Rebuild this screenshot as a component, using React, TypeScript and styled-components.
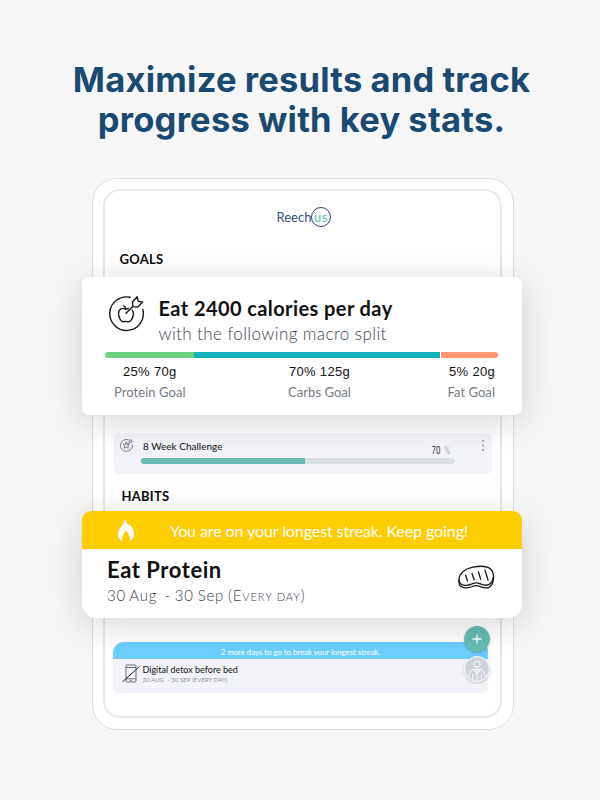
import React from 'react';
import styled, { createGlobalStyle } from 'styled-components';

const GlobalStyle = createGlobalStyle`
  *, *::before, *::after { box-sizing: border-box; }
  body { margin: 0; background: #f7f7f7; font-family: Lato, "Open Sans", sans-serif; color: #111; }
  svg { display: block; flex: none; }
`;

const Page = styled.main`
  width: 600px;
  height: 800px;
  padding: 60px 0 0 3px;
  overflow: hidden;
  background: #f7f7f7;
  display: flex;
  flex-direction: column;
  align-items: center;
`;

const Headline = styled.h1`
  margin: 0 0 38px;
  font: 700 34.5px/40px Inter, sans-serif;
  letter-spacing: 0.25px;
  word-spacing: -0.5px;
  text-align: center;
  color: #1a4971;
  white-space: nowrap;
`;

const Tablet = styled.div`
  width: 422px;
  height: 552px;
  margin-left: 3px;
  padding: 10px 11px 11px 10px;
  border: 1px solid #dcdcdc;
  border-radius: 25px;
  background: #fff;
`;

const Screen = styled.div`
  height: 529px;
  border: 2px solid #e9e9e9;
  border-radius: 17px;
  display: flex;
  flex-direction: column;
`;

const Logo = styled.div`
  height: 52px;
  padding-left: 171.5px;
  display: flex;
  align-items: center;
  font-size: 13px;
  color: #34507e;
`;

const LogoRing = styled.span`
  width: 20px;
  height: 20px;
  margin-left: -0.5px;
  border: 1px solid #24406f;
  border-radius: 50%;
  display: flex;
  align-items: center;
  justify-content: center;
  padding-bottom: 1px;
  color: #5bbfb4;
  letter-spacing: 0.6px;
`;

const SectionTitle = styled.h2<{ $indent: number; $top: number }>`
  margin: ${(p) => p.$top}px 0 0 ${(p) => p.$indent}px;
  font-size: 13px;
  font-weight: 700;
  line-height: 20px;
  letter-spacing: 0.25px;
  color: #0b0b0b;
`;

const FloatingCard = styled.section<{ $height: number; $top: number; $radius: string }>`
  position: relative;
  z-index: 1;
  flex: none;
  height: ${(p) => p.$height}px;
  margin: ${(p) => p.$top}px -22px 0 -23px;
  border-radius: ${(p) => p.$radius};
  background: #fff;
  box-shadow: 0 7px 34px rgba(0, 0, 0, 0.17);
  white-space: nowrap;
`;

const GoalHeader = styled.div`
  display: flex;
  padding: 18px 0 0 26px;
  gap: 12.5px;
`;

const GoalTitle = styled.div`
  margin-top: 1px;
  font-size: 20px;
  font-weight: 700;
  line-height: 25px;
  letter-spacing: 0.41px;
`;

const GoalSubtitle = styled.div`
  font-size: 17px;
  font-weight: 300;
  line-height: 25px;
  letter-spacing: 0.41px;
  color: #3c434f;
`;

const MacroBar = styled.div`
  height: 6px;
  margin: 6px 24px 0 23px;
  border-radius: 3px;
  overflow: hidden;
  display: grid;
  grid-template-columns: 88.5px 246px 1fr;
  column-gap: 0.5px;
`;

const MacroSegment = styled.span<{ $color: string }>`
  background: ${(p) => p.$color};
`;

const MacroStats = styled.div`
  display: flex;
  justify-content: space-between;
  padding: 4px 27px 0 32px;
`;

const Stat = styled.div<{ $align?: string; $shift?: number }>`
  margin-left: ${(p) => p.$shift ?? 0}px;
  text-align: ${(p) => p.$align ?? 'center'};
`;

const StatValue = styled.div`
  font: 400 13px/20px "Liberation Sans", Arial, sans-serif;
  letter-spacing: 0.3px;
`;

const StatLabel = styled.div`
  font-size: 13px;
  line-height: 20px;
  letter-spacing: 0.05px;
  color: #757b85;
`;

const ChallengeRow = styled.div`
  flex: none;
  display: flex;
  height: 41px;
  margin: 18px 8px 0 9px;
  padding: 6px 6px 0 6px;
  border-radius: 5px;
  background: #f3f4f9;
`;

const ChallengeBody = styled.div`
  width: 314px;
  margin: 0 26px 0 8px;
`;

const ChallengeLine = styled.div`
  display: flex;
  justify-content: space-between;
  height: 19px;
  padding: 0 5px 0 2px;
  font-size: 10px;
  line-height: 15px;
`;

const Percent = styled.span`
  font: 400 10px/23px Roboto, sans-serif;
  transform: scaleX(0.8);
  transform-origin: right;
  word-spacing: 2px;
  color: #333;
`;

const PercentSign = styled.span`
  color: #aaafb4;
`;

const Track = styled.div`
  height: 5.5px;
  border-radius: 3px;
  background: #d9dee3;
  overflow: hidden;
`;

const Fill = styled.div`
  width: 164px;
  height: 100%;
  background: #68bcb3;
`;

const StreakBanner = styled.div`
  height: 38px;
  display: flex;
  align-items: center;
  padding-left: 35px;
  gap: 35px;
  border-radius: 9px 9px 0 0;
  background: #ffcd00;
  color: #fff;
  font-size: 16px;
  letter-spacing: -0.09px;
`;

const HabitBody = styled.div`
  display: flex;
  justify-content: space-between;
  padding: 8px 27px 0 25px;
`;

const HabitTitle = styled.div`
  font-size: 22px;
  font-weight: 700;
  line-height: 26px;
  letter-spacing: 0.55px;
`;

const HabitDates = styled.div`
  font-size: 15px;
  font-weight: 300;
  line-height: 25px;
  letter-spacing: 0.8px;
  word-spacing: -1.1px;
  white-space: pre;
  color: #3c434f;
`;

const SmallCaps = styled.span`
  font-variant-caps: small-caps;
  letter-spacing: 0.95px;
`;

const SteakSlot = styled.div`
  padding-top: 8px;
`;

const DetoxCard = styled.section`
  position: relative;
  flex: none;
  height: 51px;
  margin: 24px 12px 0 8px;
  border-radius: 11px 11px 5px 5px;
  background: #f3f4f9;
`;

const DetoxBanner = styled.div`
  height: 17px;
  border-radius: 11px 9px 0 0;
  background: #6ccfff;
  color: #fff;
  font-size: 8px;
  line-height: 20px;
  letter-spacing: -0.1px;
  text-align: center;
`;

const DetoxBody = styled.div`
  display: flex;
  gap: 3px;
  padding: 5px 0 0 8.5px;
`;

const DetoxTitle = styled.div`
  font-size: 9px;
  line-height: 11px;
`;

const DetoxDates = styled.div`
  font-size: 6px;
  line-height: 10px;
  letter-spacing: 0.08px;
  white-space: pre;
  color: #8b9098;
`;

const RoundActions = styled.div`
  position: absolute;
  top: -16px;
  right: -2px;
  display: flex;
  flex-direction: column;
  gap: 4px;
`;

const RoundButton = styled.button<{ $color: string; $ring: string }>`
  width: 26px;
  height: 26px;
  padding: 0;
  border: 1px solid ${(p) => p.$ring};
  border-radius: 50%;
  background: ${(p) => p.$color};
  display: flex;
  align-items: center;
  justify-content: center;
  overflow: hidden;
  box-shadow: 0 1px 3px rgba(0, 0, 0, 0.2);
`;

const TargetIcon = () => (
  <svg width="38" height="38" viewBox="0 0 38 38" fill="none" stroke="#17191c" strokeWidth="1.4" strokeLinecap="round" strokeLinejoin="round">
    <path d="M22.200 2.300A16.800 16.800 0 1 0 34.800 14.500" />
    <path d="M17.800 14.300C14.500 12.200 10.500 14 10.500 18.600c0 4.300 2.800 8.200 5 8.200.9 0 1.300-.4 2.400-.4s1.500.4 2.400.4c2.300 0 5.100-3.900 5.100-8.200 0-1.500-.4-2.700-1.100-3.500M17.800 14.300c.9-.5 1.700-.8 2.500-.8M17.800 14.200c0-1.700-.8-2.900-2.200-3.400" />
    <path d="M18 18.300 24.800 11.600M24.800 11.600l-.3-4.900L29.200 1.800l1 4.400 4.600.9-5 4.900Z" />
  </svg>
);

const StarTargetIcon = () => (
  <svg width="13" height="13" viewBox="0 0 13 13" fill="none" stroke="#555b62" strokeWidth=".75" strokeLinejoin="round">
    <path d="M8.800.9A6 6 0 1 0 12.300 5.200" />
    <path d="m6.300 3 .9 2.200 2.200.2-1.600 1.500.5 2.400-2-1.200-2.100 1.200.5-2.400-1.600-1.500 2.300-.2ZM6.400 6.400l3-3M9.300 3.400V1.900L10.800.5l.3 1.300 1.500.3-1.400 1.500Z" />
  </svg>
);

const DotsIcon = () => (
  <svg width="4" height="13" viewBox="0 0 4 13" fill="#adb1b6">
    <circle cx="2" cy="2" r="1.150" />
    <circle cx="2" cy="6.500" r="1.150" />
    <circle cx="2" cy="11" r="1.150" />
  </svg>
);

const FlameIcon = () => (
  <svg width="18" height="24" viewBox="0 0 18 24" fill="#fff">
    <path d="M8.100 0c.6 4.200 2.400 5.400 3 7.900.5-.5.8-1.400.8-2.200 3 2.700 5.200 6.500 5.200 10.100 0 3.400-1.600 6.200-5 7.800 2-3.200.6-6.400-3-10.800-3.500 4.400-5.100 7.600-3.200 10.800-3.400-1.400-5-4.200-5-7.400C.9 10 7.900 6.700 8.100 0Z" />
  </svg>
);

const SteakIcon = () => (
  <svg width="38" height="26" viewBox="0 0 38 26" fill="none" stroke="#17191c" strokeWidth="1.300" strokeLinecap="round" strokeLinejoin="round">
    <path d="M2 14.500C2 8 8.500 3.700 16 2.200c5.500-1.100 12-1.500 16 .7 4.800 2.600 5.800 10 2.600 14.200-3 4-7.300 3.600-11.100 1.800-3.500-1.600-5.600-1.400-8.500 0C9 21.800 2 20.500 2 14.500Z" />
    <path d="M2 15v2.500c.3 5.500 7.500 6.700 13.200 4 3-1.400 5.200-1.300 8.300.1 4 1.800 8.600 2 11.300-2 1.400-2 1.800-4.300 1.800-8" />
    <path d="m8.500 10 2 6M15 8.500l2.200 6.500M21.400 6.800l2.300 7.600M28 5.200l3 9.800" />
  </svg>
);

const NoPhoneIcon = () => (
  <svg width="18" height="19" viewBox="0 0 18 19" fill="none" stroke="#5c6269" strokeWidth=".9">
    <rect x="4" y="1" width="10" height="17" rx="1" />
    <path d="M4 3.500h10M4 14.800h10M8 16.400h2" />
    <path d="M.6 17.700 17.400 2.600" stroke="#222" strokeWidth="1" />
  </svg>
);

const PlusIcon = () => (
  <svg width="10" height="10" viewBox="0 0 10 10" stroke="#fff" strokeWidth="1.300">
    <path d="M5 .5v9M.5 5h9" />
  </svg>
);

const CoachIcon = () => (
  <svg width="24" height="24" viewBox="0 0 24 24" fill="none" stroke="#fff" strokeWidth=".9">
    <circle cx="12" cy="7.200" r="3.200" />
    <path d="M3.800 20.500C4 16 5.500 13.200 8.800 12.600L12 17l3.200-4.400c3.300.6 4.800 3.400 5 7.900M7.600 17V24M16.400 17V24M8.800 12.600h6.400M11.200 13 11 15.500M12.800 13l.2 2.500M12 17v7" />
  </svg>
);

export default function App() {
  return (
    <>
      <GlobalStyle />
      <Page>
        <Headline>
          Maximize results and track
          <br />
          progress with key stats.
        </Headline>
        <Tablet>
          <Screen>
            <Logo>
              Reech
              <LogoRing>us</LogoRing>
            </Logo>
            <SectionTitle $indent={14.5} $top={6}>GOALS</SectionTitle>

            <FloatingCard $height={138} $top={8} $radius="7px">
              <GoalHeader>
                <TargetIcon />
                <div>
                  <GoalTitle>Eat 2400 calories per day</GoalTitle>
                  <GoalSubtitle>with the following macro split</GoalSubtitle>
                </div>
              </GoalHeader>
              <MacroBar>
                <MacroSegment $color="#6dd17b" />
                <MacroSegment $color="#0eb3bf" />
                <MacroSegment $color="#ff966f" />
              </MacroBar>
              <MacroStats>
                <Stat>
                  <StatValue>25% 70g</StatValue>
                  <StatLabel>Protein Goal</StatLabel>
                </Stat>
                <Stat $shift={6}>
                  <StatValue>70% 125g</StatValue>
                  <StatLabel>Carbs Goal</StatLabel>
                </Stat>
                <Stat $align="right">
                  <StatValue>5% 20g</StatValue>
                  <StatLabel>Fat Goal</StatLabel>
                </Stat>
              </MacroStats>
            </FloatingCard>

            <ChallengeRow>
              <StarTargetIcon />
              <ChallengeBody>
                <ChallengeLine>
                  8 Week Challenge
                  <Percent>
                    70 <PercentSign>%</PercentSign>
                  </Percent>
                </ChallengeLine>
                <Track>
                  <Fill />
                </Track>
              </ChallengeBody>
              <DotsIcon />
            </ChallengeRow>
            <SectionTitle $indent={16.5} $top={12}>HABITS</SectionTitle>

            <FloatingCard $height={107} $top={5} $radius="9px 9px 14px 14px">
              <StreakBanner>
                <FlameIcon />
                You are on your longest streak. Keep going!
              </StreakBanner>
              <HabitBody>
                <div>
                  <HabitTitle>Eat Protein</HabitTitle>
                  <HabitDates>
                    {'30 Aug  - 30 Sep '}
                    <SmallCaps>(Every day)</SmallCaps>
                  </HabitDates>
                </div>
                <SteakSlot>
                  <SteakIcon />
                </SteakSlot>
              </HabitBody>
            </FloatingCard>

            <DetoxCard>
              <DetoxBanner>2 more days to go to break your longest streak.</DetoxBanner>
              <DetoxBody>
                <NoPhoneIcon />
                <div>
                  <DetoxTitle>Digital detox before bed</DetoxTitle>
                  <DetoxDates>{'30 AUG  - 30 SEP (EVERY DAY)'}</DetoxDates>
                </div>
              </DetoxBody>
              <RoundActions>
                <RoundButton $color="#68bcb3" $ring="#68bcb3" aria-label="Add">
                  <PlusIcon />
                </RoundButton>
                <RoundButton $color="#cdd3d9" $ring="#fff" aria-label="Coach">
                  <CoachIcon />
                </RoundButton>
              </RoundActions>
            </DetoxCard>
          </Screen>
        </Tablet>
      </Page>
    </>
  );
}
